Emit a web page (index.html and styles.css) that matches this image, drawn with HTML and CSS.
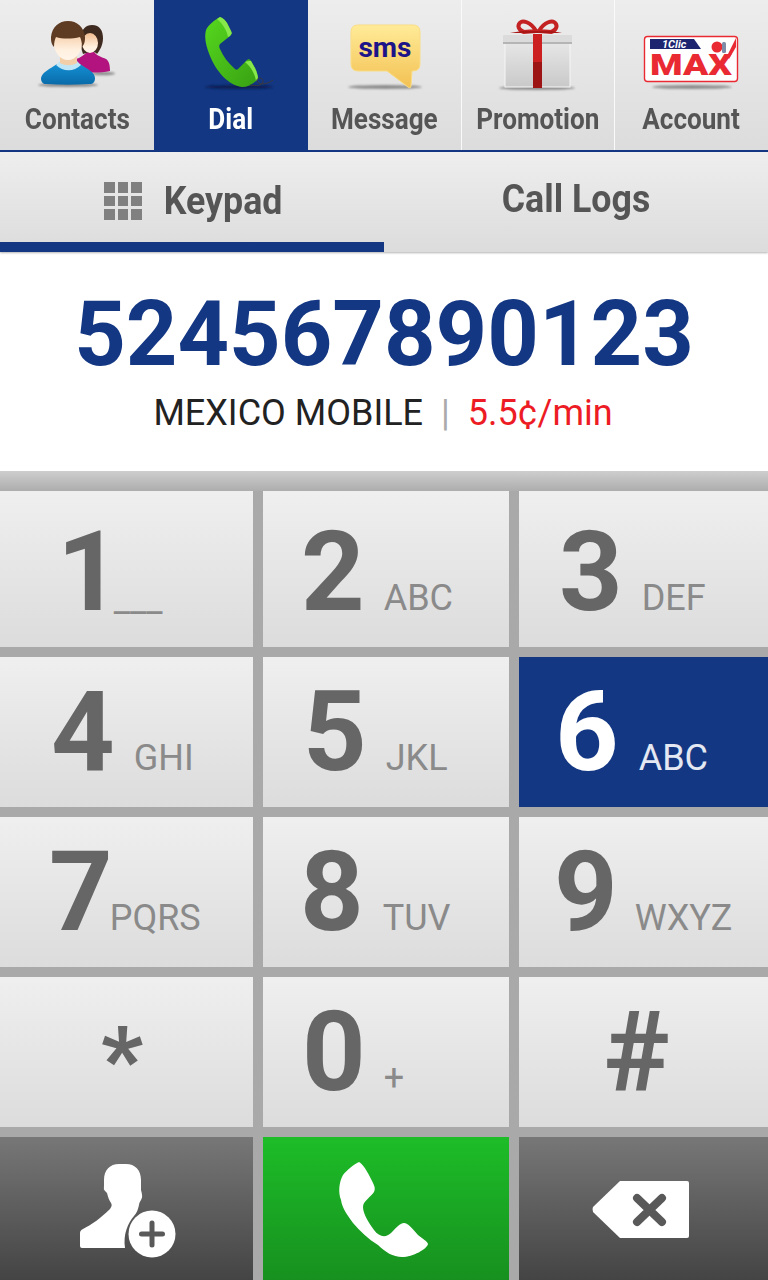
FILE: index.html
```html
<!DOCTYPE html>
<html lang="en">
<head>
<meta charset="utf-8">
<title>Dialer</title>
<link rel="stylesheet" href="styles.css">
</head>
<body>
<div class="app">
  <nav class="nav">
    <a class="nav-item">
      <svg class="nav-icon" viewBox="27 0 100 92" width="100" height="92">
        <defs>
          <linearGradient id="skin" x1="0" y1="0" x2="0" y2="1"><stop offset="0" stop-color="#f2bd90"/><stop offset=".7" stop-color="#fff0df"/><stop offset="1" stop-color="#fff5ea"/></linearGradient>
          <linearGradient id="blue" x1="0" y1="0" x2="0" y2="1"><stop offset="0" stop-color="#1390d4"/><stop offset="1" stop-color="#0a6aa8"/></linearGradient>
          <linearGradient id="green" x1="0" y1="0" x2="1" y2="1"><stop offset="0" stop-color="#56d81e"/><stop offset="1" stop-color="#38a013"/></linearGradient>
          <linearGradient id="sms" x1="0" y1="0" x2="0" y2="1"><stop offset="0" stop-color="#ffeb98"/><stop offset="1" stop-color="#f3c153"/></linearGradient>
          <linearGradient id="box" x1="0" y1="0" x2="0" y2="1"><stop offset="0" stop-color="#e6e6e6"/><stop offset="1" stop-color="#c9c9c9"/></linearGradient>
          <filter id="blur" x="-20%" y="-100%" width="140%" height="300%"><feGaussianBlur stdDeviation="1.1"/></filter>
        </defs>
        <ellipse cx="103" cy="73.5" rx="12" ry="1.8" fill="#8d8d8d" filter="url(#blur)"/>
        <ellipse cx="68" cy="85" rx="30" ry="2" fill="#8d8d8d" filter="url(#blur)"/>
        <path d="M76 59c4-1 8-4 11-7h7c3 4 8 5 12 7 3 2 4 6 4 12-10 2-22 2-30 0z" fill="#b3137f"/>
        <path d="M81 38c0-9 5-13 11-13 8 0 11 6 11 13 0 7-3 12-6 16-2-3-8-2-14 0-2-5-2-10-2-16z" fill="#3e2a1f"/>
        <ellipse cx="90" cy="43" rx="8" ry="10" fill="url(#skin)"/>
        <path d="M41 78c1-6 9-9 16-14h23c7 5 15 8 15 14 0 4-2 6-5 6-15 1-30 1-44 0-3 0-5-2-5-6z" fill="url(#blue)"/>
        <path d="M56 65c2-2 3-3 4-4h17c1 1 2 2 4 4-7 7-18 7-25 0z" fill="#bfe6f6"/>
        <path d="M60 54h17v9c-5 3-12 3-17 0z" fill="#f2cfa8"/>
        <ellipse cx="68" cy="43" rx="14" ry="17" fill="url(#skin)"/>
        <path d="M54 47c-3-3-3-7-3-10 1-10 8-16 17-16s16 6 17 16c0 3 0 7-3 10 0-5-1-8-2-10-8 2-18 2-24 0-1 2-2 5-2 10z" fill="#5e3b23"/>
      </svg>
      <span class="nav-label"><span class="cond">Contacts</span></span>
    </a>
    <a class="nav-item active">
      <svg class="nav-icon" viewBox="181 0 100 92" width="100" height="92">
        <ellipse cx="239" cy="87" rx="34" ry="2" fill="#0a1f52" filter="url(#blur)"/>
        <path d="M220 17c3 1 5 3 7 6l4 8c1 2 1 3-1 5l-10 8c-1 1-1 3 0 5 3 7 8 14 15 20 1 1 2 1 3 0l9-9c1-1 3-1 4 1l4 7c2 4 3 8 3 11-5 5-10 8-16 8-14-2-26-16-32-31-4-10-6-18-4-26 2-5 9-10 14-13z" fill="url(#green)"/>
        <path d="M220 17c3 1 5 3 7 6l4 8c1 2 1 3-1 5l-2 1c-1-6-5-13-11-18zM245 62c1-1 4-1 6-1l4 7c2 4 3 8 3 11l-2 2c-1-7-5-14-11-19z" fill="#86e84a"/>
        <path d="M250 85c6 1 12 1 13-3 1-5-7-5-6-1 1 4 10 4 16-1" fill="none" stroke="#39393f" stroke-width="1"/>
      </svg>
      <span class="nav-label"><span class="cond">Dial</span></span>
    </a>
    <a class="nav-item">
      <svg class="nav-icon" viewBox="334 0 100 92" width="100" height="92">
        <ellipse cx="384" cy="87" rx="37" ry="2" fill="#8d8d8d" filter="url(#blur)"/>
        <path d="M357 25h55q7 0 7 7v32q0 7-7 7h-1l-1 15q0 3-3 1l-21-16h-29q-7 0-7-7V32q0-7 7-7z" fill="url(#sms)" stroke="#fbdd85"/>
        <text x="384" y="57" class="sms-text">sms</text>
      </svg>
      <span class="nav-label"><span class="cond">Message</span></span>
    </a>
    <a class="nav-item sep">
      <svg class="nav-icon" viewBox="488 0 100 92" width="100" height="92">
        <ellipse cx="537" cy="88" rx="38" ry="2" fill="#8d8d8d" filter="url(#blur)"/>
        <rect x="505" y="43" width="65" height="44" fill="url(#box)" stroke="#f6f6f6"/>
        <rect x="503" y="35" width="69" height="9" rx="1" fill="#dbdbdb"/>
        <rect x="503" y="42" width="69" height="2" fill="#b5b5b5"/>
        <rect x="533" y="34" width="9" height="54" fill="#9c1414"/>
        <rect x="533" y="34" width="9" height="28" fill="#cc2020"/>
        <path d="M536 31c-5-9-14-12-17-7-2 4 2 7 5 8zM539 31c5-9 14-12 17-7 2 4-2 7-5 8z" fill="none" stroke="#c42222" stroke-width="4"/>
        <path d="M510 33l12-2h30l10 2z" fill="#a81616"/>
      </svg>
      <span class="nav-label"><span class="cond">Promotion</span></span>
    </a>
    <a class="nav-item sep">
      <svg class="nav-icon" viewBox="642 0 100 92" width="100" height="92">
        <ellipse cx="692" cy="87" rx="40" ry="2" fill="#8d8d8d" filter="url(#blur)"/>
        <rect x="644.5" y="36.5" width="93" height="45" rx="3" fill="#fff" stroke="#ea2a33" stroke-width="1.4"/>
        <path d="M650 39h44l7 10h-51z" fill="#1d2570"/>
        <text x="662" y="48" class="logo-small">1Clic</text>
        <text x="650" y="75" class="logo-max" textLength="82" lengthAdjust="spacingAndGlyphs">MAX</text>
        <circle cx="717" cy="47" r="5.500" fill="#ea2a33"/>
        <rect x="722" y="42" width="4" height="11" rx="1.500" fill="#7e8ca8"/>
        <path d="M727 56l9-18v9l-7 12z" fill="#ea2a33"/>
      </svg>
      <span class="nav-label"><span class="cond">Account</span></span>
    </a>
  </nav>

  <div class="tabs">
    <a class="tab current">
      <span class="grid-icon"><i></i><i></i><i></i><i></i><i></i><i></i><i></i><i></i><i></i></span>
      <span class="tab-label">Keypad</span>
    </a>
    <a class="tab logs"><span class="tab-label">Call Logs</span></a>
  </div>

  <section class="display">
    <div class="number">524567890123</div>
    <div class="rate">
      <span>MEXICO MOBILE</span><span class="bar">|</span><span class="price">5.5¢/min</span>
    </div>
  </section>

  <div class="strip"></div>

  <div class="keypad">
    <button class="key k1"><span class="d">1</span><span class="s">___</span></button>
    <button class="key k2"><span class="d">2</span><span class="s">ABC</span></button>
    <button class="key k3"><span class="d">3</span><span class="s">DEF</span></button>
    <button class="key k4"><span class="d">4</span><span class="s">GHI</span></button>
    <button class="key k5"><span class="d">5</span><span class="s">JKL</span></button>
    <button class="key k6 on"><span class="d">6</span><span class="s">ABC</span></button>
    <button class="key k7"><span class="d">7</span><span class="s">PQRS</span></button>
    <button class="key k8"><span class="d">8</span><span class="s">TUV</span></button>
    <button class="key k9"><span class="d">9</span><span class="s">WXYZ</span></button>
    <button class="key kstar"><span class="d">*</span></button>
    <button class="key k0"><span class="d">0</span><span class="s">+</span></button>
    <button class="key khash"><span class="d">#</span></button>
    <button class="key dark">
      <svg viewBox="0 1137 253 143" width="253" height="143">
        <path d="M104 1190v-10c0-10 6-16 15-16h7c9 0 15 6 15 16v10c1 4 2 7 0 10-1 2-2 3-2 5-1 4-2 8-5 11-6 7-11 18-9 32H82q-2 0-2-2v-13c0-2 1-3 3-4 8-4 18-11 27-20 2-3 2-4 1-6-2-3-3-6-4-10-2-2-4-4-4-7z" fill="#fff"/>
        <circle cx="152" cy="1234" r="23.500" fill="#fff"/>
        <path d="M152 1223v22M141.500 1234h21" stroke="#595959" stroke-width="5" stroke-linecap="round" fill="none"/>
      </svg>
    </button>
    <button class="key green">
      <svg viewBox="263 1137 246 143" width="246" height="143">
        <path d="M359 1162c4 2 8 9 12 17 3 6 5 9 3 13-3 5-11 9-11 15 0 7 6 16 11 23 5 7 12 8 17 3 4-4 9-10 13-10 4 0 8 5 14 12 4 3 10 7 10 9-1 5-15 13-26 13-9 0-17-5-24-12-10-6-18-14-25-22-5-7-11-15-12-23C338 1192 339 1182 343 1175 347 1170 354 1164 359 1162z" fill="#fff"/>
      </svg>
    </button>
    <button class="key dark">
      <svg viewBox="519 1137 249 143" width="249" height="143">
        <path d="M620 1181h67q2 0 2 2v53q0 2-2 2h-67l-27-26q-1-3 0-5z" fill="#fff"/>
        <path d="M637 1198l25 24M662 1198l-25 24" stroke="#595959" stroke-width="8" stroke-linecap="round" fill="none"/>
      </svg>
    </button>
  </div>
</div>
</body>
</html>
```
FILE: styles.css
```css
* { box-sizing: border-box; }
html, body { margin: 0; padding: 0; }
body { width: 768px; height: 1280px; overflow: hidden; font-family: Roboto, "Liberation Sans", sans-serif; background: #fff; }
.app { width: 768px; height: 1280px; display: flex; flex-direction: column; }

.nav { height: 152px; display: grid; grid-template-columns: 154px 154px 153px 153px 154px; border-bottom: 2px solid #133783; }
.nav-item { display: flex; flex-direction: column; align-items: center; background: linear-gradient(#ededed, #dcdcdc); color: #555; height: 150px; }
.nav-item.sep { border-left: 1px solid #fafafa; }
.nav-item.active { background: #133783; color: #fff; }
.nav-icon { display: block; flex: none; }
.nav-label { font-size: 30px; font-weight: 700; line-height: 36px; margin-top: 9px; white-space: nowrap; }
.cond { display: inline-block; transform: scaleX(.87); }

.sms-text { font: 700 28px Roboto, sans-serif; fill: #1c1488; text-anchor: middle; }
.logo-small { font: italic 700 11px Roboto, sans-serif; fill: #fff; }
.logo-max { font: 900 30px Roboto, sans-serif; fill: #ea2a33; }

.tabs { height: 100px; display: grid; grid-template-columns: 384px 384px; background: linear-gradient(#eeeeee, #dcdcdc); box-shadow: 0 1px 2px rgba(0,0,0,.3); position: relative; }
.tab { display: flex; align-items: center; justify-content: center; gap: 22px; color: #555; height: 100px; }
.tab.current { border-bottom: 10px solid #133783; padding-top: 8px; padding-left: 2px; }
.tab.logs { padding-bottom: 6px; }
.grid-icon { display: grid; grid-template-columns: repeat(3, 10.500px); grid-auto-rows: 10.500px; gap: 3px; }
.grid-icon i { background: #808080; display: block; }
.tab-label { font-size: 38px; font-weight: 700; transform: scaleX(.94); transform-origin: center; margin: 0 -4px; white-space: nowrap; }

.display { height: 219px; background: #fff; display: flex; flex-direction: column; align-items: center; }
.number { font-size: 90px; font-weight: 700; color: #133783; line-height: 104px; margin-top: 31px; white-space: nowrap; }
.rate { font-size: 36px; line-height: 42px; color: #222; margin-top: 5px; padding-right: 2px; display: flex; white-space: nowrap; }
.bar { color: #aaa; margin: 0 18px; }
.price { color: #ed1c24; }

.strip { height: 20px; background: linear-gradient(#cecece, #adadad); }

.keypad { flex: 1; display: grid; grid-template-columns: 253px 246px 249px; grid-template-rows: 156px 150px 150px 150px 143px; gap: 10px; background: #a9a9a9; }
.key { border: 0; margin: 0; padding: 0 0 20px; font-family: inherit; display: flex; align-items: flex-end; justify-content: flex-start; background: linear-gradient(#efefef, #dcdcdc); color: #666; }
.key .d { font-size: 111px; font-weight: 700; line-height: 110px; }
.key .s { font-size: 36px; line-height: 40px; color: #8a8a8a; margin: 0 0 9px 19px; white-space: nowrap; }
.k1 { padding-left: 57px; }
.k1 .d { letter-spacing: -7px; }
.k1 .s { margin-left: 0; margin-bottom: 8px; }
.k2 { padding-left: 38px; }
.k3 { padding-left: 40px; }
.k4 { padding-left: 51px; }
.k5 { padding-left: 40px; }
.k6 { padding-left: 36px; }
.k6 .s { margin-left: 20px; }
.k7 { padding-left: 49px; }
.k7 .d { letter-spacing: -3px; }
.k7 .s { margin-left: 0; }
.k8 { padding-left: 37px; }
.k9 { padding-left: 35px; }
.k9 .s { margin-left: 17px; }
.k0 { padding-left: 39px; }
.k0 .s { margin-left: 18px; }
.kstar { padding-left: 101px; }
.kstar .d { font-size: 90px; font-weight: 900; margin-bottom: -9px; }
.khash { padding-left: 85px; }
.key.on { background: #133783; color: #fff; }
.key.on .s { color: #e4e8f2; }
.key.dark { background: linear-gradient(#777777, #444444); padding: 0; }
.key.green { background: linear-gradient(#1dbd28, #17901f); padding: 0; }
.key svg { display: block; }
```
